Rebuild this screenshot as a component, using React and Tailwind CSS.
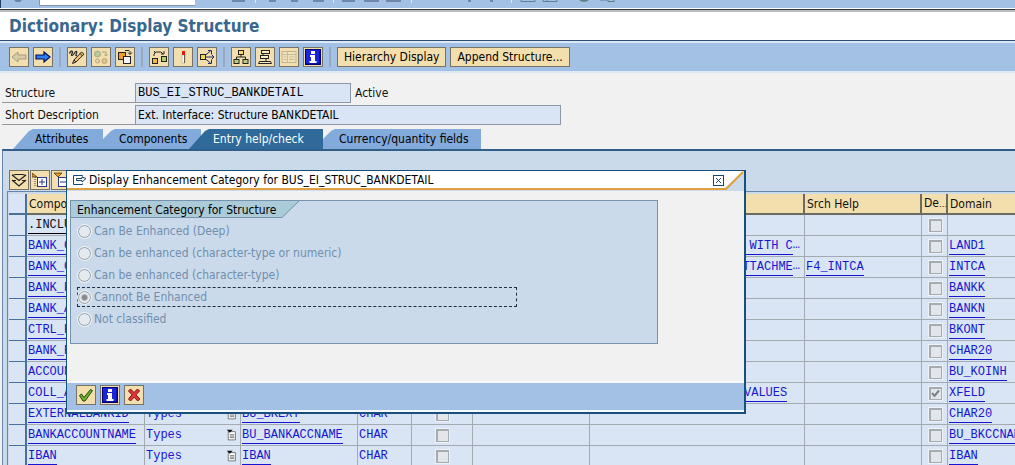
import React from "react";

const BTN =
  "flex h-5 w-5 shrink-0 items-center justify-center border border-[#777263] bg-[#f3dfae]";

function Icon({ children, size = 16 }) {
  return (
    <svg width={size} height={size} viewBox="0 0 16 16" fill="none" aria-hidden="true" className="block shrink-0">
      {children}
    </svg>
  );
}

const icons = {
  back: (
    <path d="M1 8l6-5v3h8v4H7v3z" fill="#d9cba5" stroke="#a39b85" />
  ),
  forward: (
    <path d="M15 8L9 3v3H1v4h8v3z" fill="#2f7df0" stroke="#00105a" strokeWidth="1.2" />
  ),
  display: (
    <>
      <path d="M.5 4.500c1-3 3-3 3-1.500s-2 3-.5 3.500 3-5 4.500-4-2.500 4.500.5 4" stroke="#222" strokeWidth="1.200" />
      <path d="M12.500 3l2.500 2.200L7 13l-3.500 1.500L5 11z" fill="#f6c070" stroke="#222" />
      <path d="M11 4.500l2.500 2.500M5 11l2 2" stroke="#222" />
    </>
  ),
  inactive: (
    <>
      <circle cx="4.500" cy="5" r="3" fill="#b7cb98" stroke="#a5ab8c" />
      <circle cx="11.500" cy="12" r="2.500" fill="#e2c088" stroke="#b3a684" />
      <circle cx="4.500" cy="12" r="2" fill="#ead6a4" stroke="#b3a684" />
      <path d="M9 3h4v4M11.500 5.500L13 7l1.500-1.500" stroke="#aaa184" />
    </>
  ),
  other: (
    <>
      <rect x="1.500" y="3.500" width="7" height="7" fill="#f39b2b" stroke="#222" />
      <rect x="6.500" y="7.500" width="7" height="7" fill="#f4f4ff" stroke="#222" />
      <path d="M8 1.500h4l1 1V5M11 3.500L13 5.500l2-2" stroke="#222" />
    </>
  ),
  activate: (
    <>
      <rect x="1.500" y="9.500" width="5" height="5" fill="#f3b93f" stroke="#222" />
      <rect x="10.500" y="7.500" width="5" height="5" fill="#b4cb69" stroke="#222" />
      <path d="M3 7V5l2-2h5l2 2M3.500 3.500V2M10 5h3V2" stroke="#222" />
    </>
  ),
  test: (
    <>
      <path d="M7 6h3v8H7z" fill="#fff" stroke="#b8ae98" strokeWidth=".7" />
      <path d="M7 2h3v4H7z" fill="#e11818" />
      <path d="M9.500 6v8" stroke="#665c50" />
    </>
  ),
  where: (
    <>
      <path d="M6 8h9M6.500 6l5-4M6.500 10l5 4M9 1.500h3.500V5M12.500 5.500L15 8l-2.500 2.500M9 14.500h3.500V11" stroke="#1b2a70" />
      <rect x="1.500" y="5.500" width="5" height="5" fill="#f6dc3f" stroke="#222" />
    </>
  ),
  hierarchy: (
    <>
      <path d="M8 5v3M3.500 11V8h9v3" stroke="#222" />
      <rect x="5.500" y="1.500" width="5" height="4" fill="#f6dc6f" stroke="#222" />
      <rect x="1" y="10.500" width="5" height="4" fill="#b9cf7b" stroke="#222" />
      <rect x="10" y="10.500" width="5" height="4" fill="#b9cf7b" stroke="#222" />
    </>
  ),
  stack: (
    <>
      <rect x="4.500" y="1.500" width="8" height="3" fill="#f6efc8" stroke="#222" />
      <rect x="3.500" y="6.500" width="8" height="3" fill="#f6efc8" stroke="#222" />
      <path d="M2.500 12.500h11l1 2h-13z" fill="#f6efc8" stroke="#222" />
      <path d="M6 4.500v2M9 9.500v3" stroke="#222" />
    </>
  ),
  contents: (
    <>
      <rect x="1" y="2.500" width="14" height="11" fill="#efe3bd" stroke="#c1b48c" />
      <path d="M1 5.500h14M6.500 3v10M2.500 8h3M2.500 10.500h3M8 8h5.500M8 10.500h5.500" stroke="#c8bb94" />
    </>
  ),
  info: (
    <>
      <rect x="0" y="0" width="16" height="16" fill="#00006e" />
      <rect x="1" y="1" width="13.500" height="13.500" fill="#1a24d8" />
      <path d="M6 2h4v3H6zM5 6h5v6h1.500v2H4.500v-2H6V8H5z" fill="#fff" />
    </>
  ),
  ok: (
    <path d="M1.500 8.500l2-1.500 2.500 3.500L12.500 2.500l2 1L7 14H5z" fill="#6fb52c" stroke="#23420f" />
  ),
  cancel: (
    <path d="M2.500 4l2-2L8 5.500 11.500 2l2 2L10 7.800l3.800 4.200-2 2L8 10.200 4.500 14l-2-2L6 7.800z" fill="#e0343a" stroke="#7c1118" />
  ),
  sort: (
    <path d="M1 3.500L4.500 2.500h7l3.500 1M1 3L8 8.500 15 3M1 8l7 6 7-6M1 8.500h4M11 8.500h4" stroke="#222" strokeWidth="1.200" />
  ),
  expand: (
    <>
      <path d="M0 1l5 4H0z" fill="#e79a1c" stroke="#4a3510" strokeWidth=".8" />
      <path d="M3 5v9" stroke="#444" strokeDasharray="1 1" />
      <rect x="5.500" y="5.500" width="9" height="9" fill="#fff" stroke="#27388a" />
      <path d="M7 10h6M10 7v6" stroke="#27388a" />
    </>
  ),
  collapse: (
    <>
      <path d="M1 1h8L5 5z" fill="#e79a1c" stroke="#4a3510" strokeWidth=".8" />
      <rect x="5.500" y="5.500" width="9" height="9" fill="#fff" stroke="#27388a" />
      <path d="M7 10h6" stroke="#27388a" />
    </>
  ),
  window: (
    <path d="M11.500 4.500v-1h-9v9h9v-1M5.500 6.500h5.500V5L15 6.500 11 10V8.500H5.500z" stroke="#17476e" />
  ),
  list: (
    <>
      <path d="M3 3.500h9.500v11H3z" fill="#fff" stroke="#555" />
      <path d="M5 7.500h6M5 9.500h6M5 11.500h6" stroke="#555" />
      <path d="M1 1h8L5 5z" fill="#111" />
    </>
  ),
};

function IconButton({ name, label }) {
  return (
    <button type="button" aria-label={label} className={BTN}>
      <Icon>{icons[name]}</Icon>
    </button>
  );
}

function Separator() {
  return (
    <span className="flex w-[14px] shrink-0 justify-center">
      <span className="h-5 w-0.5 bg-[#98a9bd]" />
    </span>
  );
}

function TopBar() {
  return (
    <div className="flex h-3 shrink-0 items-start border-b-2 border-[#bdbdbd] bg-[#a3c1e5] shadow-[inset_0_-1px_0_#2c3542,inset_0_-2px_0_#ffffff]">
      <div className="h-2 w-px bg-[#1c3f63]" />
      <svg height="8" width="640" viewBox="0 0 640 8" fill="none" aria-hidden="true" className="block shrink-0">
        <path d="M13 0h8l-2 2h-4z" fill="#6b83a3" />
        <path d="M38.500 0v5.500H194" stroke="#8595a8" />
        <path d="M39 0h155v5H39z" fill="#fff" />
        <path d="M231 1h13M268 1h7M290 1h7M312 1h11M341 1h13M363 1h15M385 1h15M467 1h3M489 1h3" stroke="#6f87a8" strokeWidth="2" />
        <path d="M254.500 0v3M332.500 0v3M410.500 0v3M510.500 0v3" stroke="#dfeafa" />
        <path d="M520 0v1.500h14V0M542 0v1.500h14V0M546 0v2" stroke="#5d8192" />
        <path d="M578 0q5 4 10 0z" fill="#5b8480" />
        <path d="M599 0h8v1.500h6V0" stroke="#5b7e87" />
      </svg>
    </div>
  );
}

const TEXT_BTN = "h-5 border border-[#777263] bg-[#f3dfae] px-1.5 whitespace-nowrap text-black";

function Toolbar() {
  return (
    <div className="flex h-8 shrink-0 items-center border-y-2 border-[#dbe8f6] bg-[#a3c1e5] pl-[9px]">
      <div className="flex gap-1">
        <IconButton name="back" label="Back" />
        <IconButton name="forward" label="Forward" />
      </div>
      <Separator />
      <div className="flex gap-1">
        <IconButton name="display" label="Display/Change" />
        <IconButton name="inactive" label="Active/Inactive" />
        <IconButton name="other" label="Other object" />
      </div>
      <Separator />
      <div className="flex gap-1">
        <IconButton name="activate" label="Activate" />
        <IconButton name="test" label="Check" />
        <IconButton name="where" label="Where-used list" />
      </div>
      <Separator />
      <div className="flex gap-1">
        <IconButton name="hierarchy" label="Display object list" />
        <IconButton name="stack" label="Display navigation window" />
        <IconButton name="contents" label="Contents" />
        <IconButton name="info" label="Help" />
      </div>
      <Separator />
      <div className="flex gap-1">
        <button type="button" className={TEXT_BTN}>Hierarchy Display</button>
        <button type="button" className={TEXT_BTN}>Append Structure...</button>
      </div>
    </div>
  );
}

const FIELD = "h-5 border border-[#8d97a5] bg-[#d9e5f4] pl-0.5 text-black outline-none";
const FIELD_LABEL = "h-5 w-[133px] border-b border-[#98989c] pl-[3px] leading-5";

function HeaderFields() {
  return (
    <div className="flex flex-col gap-0.5 pt-2.5 pl-0.5">
      <div className="flex items-end">
        <label htmlFor="structure" className={FIELD_LABEL}>Structure</label>
        <input id="structure" readOnly defaultValue="BUS_EI_STRUC_BANKDETAIL" className={FIELD + " w-[216px] font-['Liberation_Mono',monospace]"} />
        <span className="pl-1 leading-5">Active</span>
      </div>
      <div className="flex items-end">
        <label htmlFor="description" className={FIELD_LABEL}>Short Description</label>
        <input id="description" readOnly defaultValue="Ext. Interface: Structure BANKDETAIL" className={FIELD + " w-[426px]"} />
      </div>
    </div>
  );
}

function Tab({ children, active, className }) {
  return (
    <button
      type="button"
      role="tab"
      aria-selected={!!active}
      className={
        "relative flex h-5 shrink-0 items-center whitespace-nowrap " +
        className +
        (active ? " z-10 bg-[#2f6a9b] text-white" : " bg-[#82aadb] text-black")
      }
    >
      {children}
    </button>
  );
}

function Tabs() {
  return (
    <div role="tablist" className="mt-1 flex pl-[13px]">
      <Tab className="w-[90px] pl-[22px] [clip-path:polygon(0_100%,16px_2px,20px_0,100%_0,100%_100%)]">Attributes</Tab>
      <Tab className="w-[98px] pl-4 [clip-path:polygon(0_100%,0_10px,8px_2px,12px_0,100%_0,100%_100%)]">Components</Tab>
      <Tab className="-ml-3 w-[134px] pl-6 [clip-path:polygon(0_100%,16px_2px,20px_0,100%_0,100%_100%)]" active>Entry help/check</Tab>
      <Tab className="w-[158px] pl-4 [clip-path:polygon(0_100%,0_10px,8px_2px,12px_0,100%_0,100%_100%)]">Currency/quantity fields</Tab>
    </div>
  );
}

const ROWS = [
  { comp: ".INCLUDE", plain: true },
  { comp: "BANK_CTRY", elem: "BANKS", text: "VALUES WITH C", more: true, domain: "LAND1" },
  { comp: "BANK_CTRYISO", elem: "INTCA", text: "ATTACHME", more: true, help: "F4_INTCA", domain: "INTCA" },
  { comp: "BANK_KEY", elem: "BANKK", domain: "BANKK" },
  { comp: "BANK_ACCT", elem: "BANKN", domain: "BANKN" },
  { comp: "CTRL_KEY", elem: "BKONT", domain: "BKONT" },
  { comp: "BANK_REF", elem: "BKREF", domain: "CHAR20" },
  { comp: "ACCOUNTHOLDER", elem: "BU_KOINH", domain: "BU_KOINH" },
  { comp: "COLL_AUTH", elem: "XEZER", text: "VALUES", checked: true, domain: "XFELD" },
  { comp: "EXTERNALBANKID", elem: "BU_BKEXT", domain: "CHAR20" },
  { comp: "BANKACCOUNTNAME", elem: "BU_BANKACCNAME", domain: "BU_BKCCNAME" },
  { comp: "IBAN", elem: "IBAN", domain: "IBAN" },
];

function Check({ checked, label }) {
  return (
    <span className="relative mx-auto block h-[15px] w-[15px] border border-[#edf2f8]">
      <input
        type="checkbox"
        disabled
        defaultChecked={checked}
        aria-label={label}
        className="block h-[13px] w-[13px] appearance-none border border-t-2 border-l-2 border-[#a6abad] bg-[#e2e6e9]"
      />
      {checked && (
        <svg width="9" height="9" viewBox="0 0 9 9" fill="none" className="absolute top-0.5 left-0.5" aria-hidden="true">
          <path d="M1 4l2.500 3L8 1.500" stroke="#7b8084" strokeWidth="2" />
        </svg>
      )}
    </span>
  );
}

function Link({ children }) {
  return (
    <a href="#" className="block h-[18px] w-fit border-b border-[#1616d2] leading-[18px] text-[#1616d2]">
      {children}
    </a>
  );
}

const TH = "h-[21px] overflow-hidden border-r-2 border-b-2 border-[#6d6a60] bg-[#f3dfae] p-0 pl-0.5 text-left font-normal whitespace-nowrap last:border-r-0";
const TD = "h-[21px] overflow-hidden border-r border-b border-[#a3aab2] p-0 pl-px align-middle whitespace-nowrap last:border-r-0";

function Grid() {
  return (
    <div className="ml-1 border-t border-l border-[#6687ab] pt-0.5 pl-px">
      <table className="w-full table-fixed border-separate border-spacing-0 bg-[#d9e5f4]">
        <colgroup>
          <col className="w-[18px]" />
          <col className="w-[118px]" />
          <col className="w-[96px]" />
          <col className="w-[117px]" />
          <col className="w-[54px]" />
          <col className="w-[61px]" />
          <col className="w-[117px]" />
          <col className="w-[215px]" />
          <col className="w-[117px]" />
          <col className="w-[26px]" />
          <col />
        </colgroup>
        <thead>
          <tr>
            <th className="h-[21px] border-r-2 border-b-2 border-[#47729c] bg-[#d9e5f4] p-0" aria-label="Row" />
            <th className={TH}>Component</th>
            <th className={TH} />
            <th className={TH} />
            <th className={TH} />
            <th className={TH} />
            <th className={TH} />
            <th className={TH} />
            <th className={TH}>Srch Help</th>
            <th className={TH}>De<span className="text-[9px]">…</span></th>
            <th className={TH}>Domain</th>
          </tr>
        </thead>
        <tbody className="font-['Liberation_Mono',monospace]">
          {ROWS.map((r) => (
            <tr key={r.comp}>
              <td className="h-[21px] border-r-2 border-b border-[#47729c] p-0" />
              <td className={TD}>
                {r.plain ? <span className="block h-[18px] w-fit border-b border-black leading-[18px]">{r.comp}</span> : <Link>{r.comp}</Link>}
              </td>
              <td className={TD}>
                {!r.plain && (
                  <span className="flex items-center justify-between pr-0.5 text-[#1616d2]">
                    Types <Icon size={12}>{icons.list}</Icon>
                  </span>
                )}
              </td>
              <td className={TD}>{r.elem && <Link>{r.elem}</Link>}</td>
              <td className={TD + " text-[#1616d2]"}>{!r.plain && "CHAR"}</td>
              <td className={TD}><Check label="Foreign key" /></td>
              <td className={TD} />
              <td className={TD}>
                {r.text && (
                  <span className={r.more ? "flex justify-end pr-1 text-[#1616d2]" : "block pl-[153px]"}>
                    <Link>{r.text}</Link>
                    {r.more && "…"}
                  </span>
                )}
              </td>
              <td className={TD}>{r.help && <Link>{r.help}</Link>}</td>
              <td className={TD}><Check checked={r.checked} label="Default" /></td>
              <td className={TD}>{r.domain && <Link>{r.domain}</Link>}</td>
            </tr>
          ))}
        </tbody>
      </table>
    </div>
  );
}

const OPTIONS = [
  "Can Be Enhanced (Deep)",
  "Can be enhanced (character-type or numeric)",
  "Can be enhanced (character-type)",
  "Cannot Be Enhanced",
  "Not classified",
];

function Dialog() {
  return (
    <section
      role="dialog"
      aria-labelledby="dialog-title"
      className="absolute top-[170px] left-[66px] z-20 flex h-[244px] w-[680px] flex-col border-2 border-t-1 border-l-1 border-[#17507d] bg-[#f1f1f1]"
    >
      <header className="relative flex h-5 shrink-0 items-center bg-[#cbdaea] pl-1">
        <svg className="absolute inset-0 h-full w-full" viewBox="0 0 678 20" preserveAspectRatio="none" aria-hidden="true">
          <path d="M0 0h677l-18 17H0z" fill="#fff" />
          <path d="M0 18h660L677 1" fill="none" stroke="#e0a040" strokeWidth="2" />
        </svg>
        <span className="relative flex items-center gap-0.5 pb-0.5 text-black">
          <Icon>{icons.window}</Icon>
          <h2 id="dialog-title">Display Enhancement Category for BUS_EI_STRUC_BANKDETAIL</h2>
        </span>
        <button type="button" aria-label="Close" className="relative mr-5 mb-0.5 ml-auto flex h-[11px] w-[11px] items-center justify-center border border-[#17476e] bg-white">
          <svg width="5" height="5" viewBox="0 0 5 5" aria-hidden="true"><path d="M0 0l5 5M5 0L0 5" stroke="#17476e" /></svg>
        </button>
      </header>
      <fieldset className="mt-[9px] ml-[3px] flex h-36 w-[588px] flex-col border border-[#7393ae] bg-[#cbdaea]">
        <legend className="sr-only">Enhancement Category for Structure</legend>
        <div className="relative flex h-[17px] w-[228px] shrink-0 items-center pl-1.5 text-black" aria-hidden="true">
          <svg className="absolute inset-0 h-full w-full" viewBox="0 0 228 17">
            <path d="M0 0h228l-17 16.500H0z" fill="#aacbd7" />
            <path d="M228 0l-17 16.500H0" fill="none" stroke="#7393ae" />
          </svg>
          <span className="relative whitespace-nowrap">Enhancement Category for Structure</span>
        </div>
        <div className="mt-[3px] flex flex-col gap-0.5 pl-1.5">
          {OPTIONS.map((o, i) => (
            <label
              key={o}
              className={
                "flex h-5 w-[440px] items-center gap-[3px] border border-dashed text-[#6f8fae] " +
                (i === 3 ? "border-[#1b2f45]" : "border-transparent")
              }
            >
              <input
                type="radio"
                name="category"
                disabled
                defaultChecked={i === 3}
                className="h-[13px] w-[13px] appearance-none rounded-full border border-[#8f999f] bg-[#e6eaee] outline outline-[#f3f6f9] checked:bg-[radial-gradient(circle,#888_0_2px,#e6eaee_4px)]"
              />
              {o}
            </label>
          ))}
        </div>
      </fieldset>
      <footer className="mt-auto flex h-[31px] items-start gap-1 border-y-2 border-[#f5f9fd] bg-[#a3c1e5] pt-0.5 pl-[9px]">
        <IconButton name="ok" label="Continue" />
        <IconButton name="info" label="Help" />
        <IconButton name="cancel" label="Cancel" />
      </footer>
    </section>
  );
}

export default function App() {
  return (
    <main className="relative flex h-screen flex-col overflow-hidden bg-[#f1f1f1] font-['DejaVu_Sans_Condensed','DejaVu_Sans',sans-serif] text-[12px] leading-4 text-[#111]">
      <TopBar />
      <header className="flex h-[29px] shrink-0 items-center border-b border-[#2f4d74] bg-white pl-[9px]">
        <h1 className="text-[17px] font-bold text-[#38678f]">Dictionary: Display Structure</h1>
      </header>
      <Toolbar />
      <HeaderFields />
      <Tabs />
      <div className="ml-0.5 min-h-0 flex-1 overflow-hidden border-t-2 border-l border-t-[#315f8a] border-l-[#6687ab] bg-[#cbdaea]">
        <div className="flex gap-px pt-[19px] pb-px pl-1.5">
          <IconButton name="sort" label="Sort" />
          <IconButton name="expand" label="Expand" />
          <IconButton name="collapse" label="Collapse" />
        </div>
        <Grid />
      </div>
      <Dialog />
    </main>
  );
}
